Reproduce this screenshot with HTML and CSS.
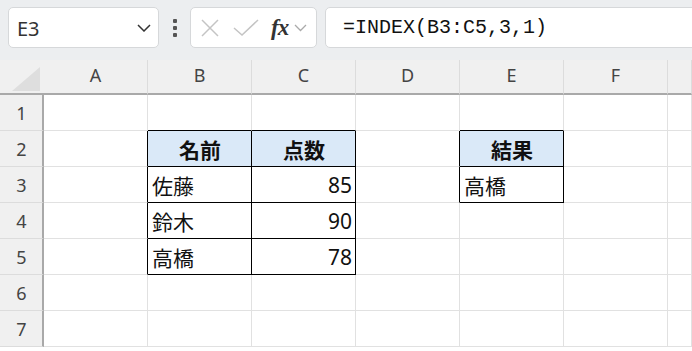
FILE: index.html
```html
<!doctype html>
<html lang="ja">
<head>
	<meta charset="UTF-8">
	<title>INDEX</title>
	<link rel="stylesheet" href="styles.css">
</head>
<body>
	<div class="bar">
		<div class="namebox">
			<span>E3</span>
			<svg class="chev" width="14" height="8" viewBox="0 0 14 8"><path d="M1 1 L7 7 L13 1" fill="none" stroke="#333" stroke-width="1.5"/></svg>
		</div>
		<div class="more"><i></i><i></i><i></i></div>
		<div class="fxbox">
			<svg width="20" height="20" viewBox="0 0 20 20"><path d="M2 2 L18 18 M18 2 L2 18" stroke="#c4c4c4" stroke-width="1.5"/></svg>
			<svg width="26" height="18" viewBox="0 0 26 18"><path d="M1 9 L9 16 L25 1" fill="none" stroke="#c4c4c4" stroke-width="1.5"/></svg>
			<span class="fx">fx</span>
			<svg width="13" height="8" viewBox="0 0 13 8"><path d="M1 1 L6.5 6.5 L12 1" fill="none" stroke="#aaa" stroke-width="1.3"/></svg>
		</div>
		<div class="formula">=INDEX(B3:C5,3,1)</div>
	</div>
	<div class="sheet">
		<div class="corner"><svg width="44" height="33" viewBox="0 0 44 33"><path d="M12 31 L40 31 L40 7 Z" fill="#dedede"/></svg></div>
		<div class="h">A</div><div class="h">B</div><div class="h">C</div><div class="h">D</div><div class="h">E</div><div class="h">F</div><div class="h"></div>

		<div class="r">1</div>
		<div class="c"></div><div class="c kt"></div><div class="c kt"></div><div class="c"></div><div class="c kt"></div><div class="c"></div><div class="c"></div>

		<div class="r">2</div>
		<div class="c kl"></div><div class="c t th">名前</div><div class="c t th">点数</div><div class="c kl"></div><div class="c t th">結果</div><div class="c"></div><div class="c"></div>

		<div class="r">3</div>
		<div class="c kl"></div><div class="c t">佐藤</div><div class="c t num">85</div><div class="c kl"></div><div class="c t">高橋</div><div class="c"></div><div class="c"></div>

		<div class="r">4</div>
		<div class="c kl"></div><div class="c t">鈴木</div><div class="c t num">90</div><div class="c"></div><div class="c"></div><div class="c"></div><div class="c"></div>

		<div class="r">5</div>
		<div class="c kl"></div><div class="c t">高橋</div><div class="c t num">78</div><div class="c"></div><div class="c"></div><div class="c"></div><div class="c"></div>

		<div class="r">6</div>
		<div class="c"></div><div class="c"></div><div class="c"></div><div class="c"></div><div class="c"></div><div class="c"></div><div class="c"></div>

		<div class="r">7</div>
		<div class="c"></div><div class="c"></div><div class="c"></div><div class="c"></div><div class="c"></div><div class="c"></div><div class="c"></div>
	</div>
</body>
</html>
```
FILE: styles.css
```css
* { box-sizing:border-box; }
body { margin:0; width:692px; height:351px; overflow:hidden; background:#fff; font-family:"Noto Sans","Noto Sans CJK JP",sans-serif; }

/* 数式バー */
.bar { height:60px; background:#eceef0; display:flex; align-items:flex-start; padding:7px 0 0 8px; }
.namebox { width:151px; height:41px; background:#fff; border:1px solid #d6d8da; border-radius:5px; display:flex; align-items:center; justify-content:space-between; padding:0 7px 0 8px; font-size:20px; color:#333; }
.namebox span { padding-top:2px; }
.more { width:31px; height:41px; display:flex; flex-direction:column; align-items:center; justify-content:center; gap:3px; }
.more i { display:block; width:4px; height:4px; background:#555; border-radius:1px; }
.fxbox { width:127px; height:41px; background:#fff; border:1px solid #d6d8da; border-radius:5px; display:flex; align-items:center; padding:0 0 0 9px; }
.fxbox svg:nth-child(2) { margin-left:13px; }
.fx { font-family:"Liberation Serif",serif; font-style:italic; font-weight:bold; font-size:23px; color:#333; margin:0 6px 0 12px; letter-spacing:-1px; }
.formula { flex:1; height:41px; margin:0 -10px 0 8px; background:#fff; border:1px solid #d6d8da; border-radius:5px; padding-left:17px; font-family:"Liberation Mono",monospace; font-size:20px; line-height:39px; color:#111; }

/* シート */
.sheet { display:grid; grid-template-columns:44px repeat(6,104px) 1fr; grid-template-rows:35px repeat(7,36px); }
.corner { background:#f0f0f0; border-bottom:2px solid #a9a9a9; }
.corner svg { display:block; }
.h { background:#f0f0f0; border-bottom:2px solid #a9a9a9; border-right:1px solid #dcdcdc; text-align:center; font-size:18px; line-height:22px; padding-top:4px; color:#444; }
.r { background:#f0f0f0; border-right:2px solid #a9a9a9; border-bottom:1px solid #dcdcdc; text-align:center; font-size:18px; color:#444; display:flex; align-items:center; justify-content:center; padding-left:1px; }
.c { border-right:1px solid #e1e1e1; border-bottom:1px solid #e1e1e1; display:flex; align-items:center; padding:0 3px 0 4px; font-size:21px; color:#111; }
.kl { border-right-color:#000; }
.kt { border-bottom-color:#000; }
.t { border-right-color:#000; border-bottom-color:#000; }
.th { background:#dae9f8; font-weight:bold; justify-content:center; }
.num { justify-content:flex-end; }
```
